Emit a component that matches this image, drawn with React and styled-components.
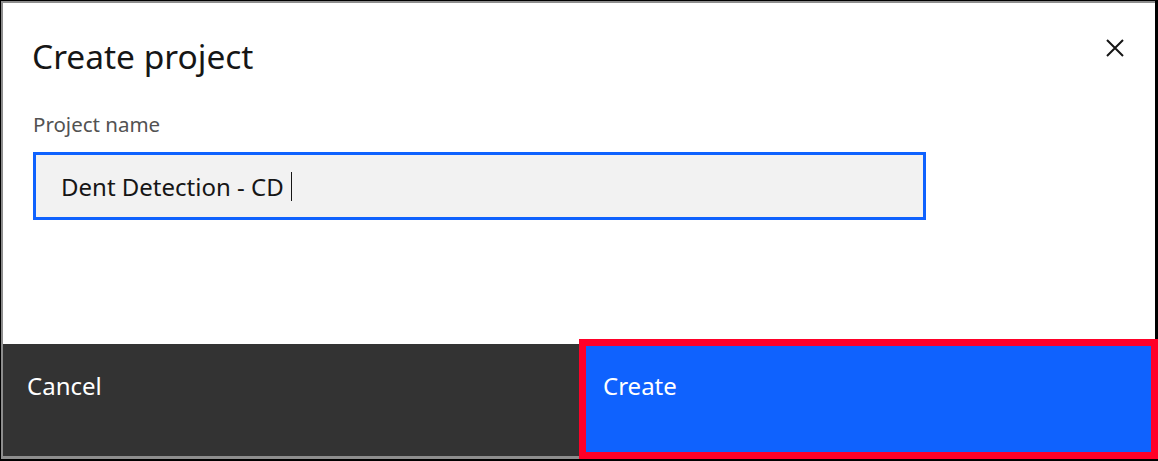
import React from "react";
import styled, { createGlobalStyle } from "styled-components";

const GlobalStyle = createGlobalStyle`
  html, body {
    margin: 0;
    padding: 0;
    background: #000000;
  }
  body {
    font-family: "Noto Sans", "Liberation Sans", sans-serif;
  }
`;

const Frame = styled.div`
  width: 1158px;
  height: 461px;
  box-sizing: border-box;
  padding: 1px 3px 2px 1px;
  background: #000000;
`;

const Modal = styled.div`
  position: relative;
  height: 100%;
  box-sizing: border-box;
  border-top: 2px solid #8d8d8d;
  border-left: 2px solid #8d8d8d;
  border-bottom: 3px solid #8d8d8d;
  background: #ffffff;
  display: flex;
  flex-direction: column;
`;

const Header = styled.div`
  display: flex;
  justify-content: space-between;
  align-items: flex-start;
  padding: 33px 30px 0 29px;
`;

const Title = styled.h2`
  margin: 0;
  font-size: 33.5px;
  line-height: 40px;
  font-weight: 400;
  color: #161616;
`;

const CloseButton = styled.button`
  border: none;
  background: none;
  padding: 0;
  margin: 3px 1px 0 0;
  width: 18px;
  height: 18px;
  display: flex;
  color: #161616;
  cursor: pointer;
`;

const Body = styled.div`
  flex: 1;
  padding: 36px 30px 0 30px;
`;

const Label = styled.label`
  display: block;
  font-size: 20.5px;
  line-height: 24px;
  color: #525252;
  margin-bottom: 16px;
`;

const Field = styled.div`
  width: 893px;
  height: 68px;
  box-sizing: border-box;
  border: 3px solid #0f62fe;
  background: #f2f2f2;
  padding-left: 25px;
  display: flex;
  align-items: center;
  font-size: 24px;
  color: #161616;
`;

const Caret = styled.span`
  display: inline-block;
  width: 1.5px;
  height: 29px;
  background: #161616;
  margin-left: 7px;
`;

const Footer = styled.div`
  display: grid;
  grid-template-columns: 1fr 1fr;
  height: 112px;
`;

const FooterButton = styled.button`
  position: relative;
  border: none;
  margin: 0;
  text-align: left;
  display: flex;
  align-items: flex-start;
  padding: 28px 24px 0 24px;
  font-family: inherit;
  font-size: 24px;
  line-height: 28px;
  color: #ffffff;
  background: ${(p) => (p.$primary ? "#0f62fe" : "#333333")};

  ${(p) =>
    p.$highlight &&
    `
    &::after {
      content: "";
      position: absolute;
      left: 0;
      top: -5px;
      right: -3px;
      bottom: -3px;
      border: 7px solid #ff0028;
      pointer-events: none;
    }
  `}
`;

function CloseIcon() {
  return (
    <svg width="18" height="18" viewBox="0 0 18 18" fill="none">
      <path d="M1 1L17 17M17 1L1 17" stroke="currentColor" strokeWidth="2" />
    </svg>
  );
}

export default function App() {
  return (
    <>
      <GlobalStyle />
      <Frame>
        <Modal>
          <Header>
            <Title>Create project</Title>
            <CloseButton aria-label="Close">
              <CloseIcon />
            </CloseButton>
          </Header>
          <Body>
            <Label>Project name</Label>
            <Field>
              Dent Detection - CD
              <Caret />
            </Field>
          </Body>
          <Footer>
            <FooterButton>Cancel</FooterButton>
            <FooterButton $primary $highlight>
              Create
            </FooterButton>
          </Footer>
        </Modal>
      </Frame>
    </>
  );
}
